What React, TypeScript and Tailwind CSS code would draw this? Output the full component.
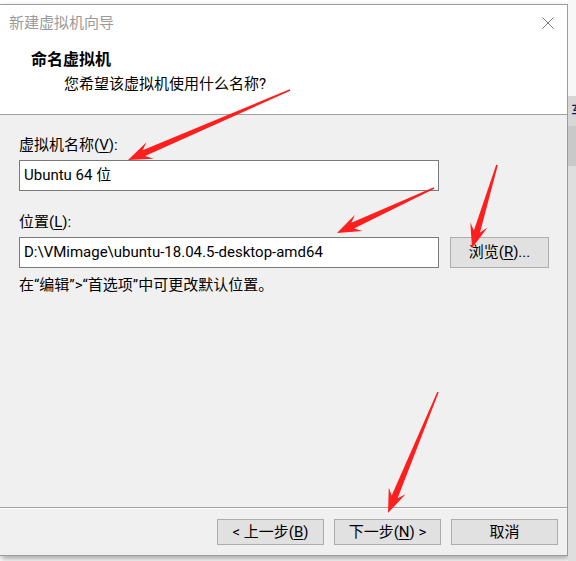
import React from "react";

const font = { fontFamily: 'Roboto, "Noto Sans CJK SC", sans-serif' };

type Arrow = { x1: number; y1: number; x2: number; y2: number };

// red annotation arrows drawn on top of the dialog
const arrows: Arrow[] = [
  { x1: 290, y1: 90, x2: 128, y2: 160 },
  { x1: 434, y1: 188, x2: 337, y2: 233 },
  { x1: 497, y1: 165, x2: 472, y2: 248 },
  { x1: 438, y1: 392, x2: 388, y2: 513 },
];

const arrowPoints = ({ x1, y1, x2, y2 }: Arrow) => {
  const dx = x2 - x1;
  const dy = y2 - y1;
  const len = Math.hypot(dx, dy);
  const ux = dx / len;
  const uy = dy / len;
  const nx = -uy;
  const ny = ux;
  const h = 24;
  const neck = h * 0.72;
  const w = 9;
  const s = 3.2;
  const t = 0.8;
  const nkx = x2 - ux * neck;
  const nky = y2 - uy * neck;
  const bx = x2 - ux * h;
  const by = y2 - uy * h;
  const pts = [
    [x1 + nx * t, y1 + ny * t],
    [nkx + nx * s, nky + ny * s],
    [bx + nx * w, by + ny * w],
    [x2, y2],
    [bx - nx * w, by - ny * w],
    [nkx - nx * s, nky - ny * s],
    [x1 - nx * t, y1 - ny * t],
  ];
  return pts.map((p) => `${p[0].toFixed(1)},${p[1].toFixed(1)}`).join(" ");
};

const Button = ({ children }: { children: React.ReactNode }) => (
  <div className="w-[107px] h-[26px] flex items-center justify-center bg-[#e1e1e1] border border-[#adadad] text-[15px] text-black">
    {children}
  </div>
);

const TextBox = ({ value }: { value: string }) => (
  <div className="w-[420px] h-[31px] bg-white border border-[#7a7a7a] flex items-center pl-[4px] text-[15px] text-black whitespace-nowrap">
    {value}
  </div>
);

export default function App() {
  return (
    <div className="relative w-[576px] h-[561px] overflow-hidden bg-white flex items-start" style={font}>
      <div className="mt-[4px] ml-[-1px] w-[569px] h-[552px] border border-[#9c9c9c] bg-[#f0f0f0] flex flex-col shadow-[2px_3px_6px_rgba(0,0,0,0.35)] shrink-0">
        {/* header */}
        <div className="h-[109px] bg-white border-b border-[#a0a0a0] box-content">
          <div className="h-[36px] flex items-center justify-between pl-[9px] pr-[13px]">
            <span className="text-[15px] text-[#9a9a9a]">新建虚拟机向导</span>
            <svg width="12" height="12" viewBox="0 0 12 12">
              <path d="M0.5 0.5 L11.5 11.5 M11.5 0.5 L0.5 11.5" stroke="#777" strokeWidth="1" />
            </svg>
          </div>
          <div className="pt-[8px] pl-[31px] text-[16px] leading-[22px] font-bold text-black">命名虚拟机</div>
          <div className="pt-[2px] pl-[64px] text-[15px] leading-[22px] text-black">您希望该虚拟机使用什么名称?</div>
        </div>

        {/* body */}
        <div className="flex-1 pl-[19px] pt-[19px] text-[15px] text-black">
          <div className="leading-[22px]">
            虚拟机名称(<span className="underline underline-offset-2">V</span>):
          </div>
          <div className="mt-[4px]">
            <TextBox value="Ubuntu 64 位" />
          </div>
          <div className="mt-[20px] leading-[22px]">
            位置(<span className="underline underline-offset-2">L</span>):
          </div>
          <div className="mt-[4px] flex items-center gap-[11px]">
            <TextBox value="D:\VMimage\ubuntu-18.04.5-desktop-amd64" />
            <div className="w-[99px] h-[31px] flex items-center justify-center bg-[#e1e1e1] border border-[#adadad]">
              浏览(<span className="underline underline-offset-2">R</span>)...
            </div>
          </div>
          <div className="mt-[6px] leading-[22px]">在“编辑”&gt;“首选项”中可更改默认位置。</div>
        </div>

        {/* footer */}
        <div className="h-[47px] border-t border-[#a0a0a0] box-content">
          <div className="h-full border-t border-white flex justify-end gap-[10px] pt-[10px] pr-[9px]">
            <Button>
              &lt; 上一步(<span className="underline underline-offset-2">B</span>)
            </Button>
            <Button>
              下一步(<span className="underline underline-offset-2">N</span>) &gt;
            </Button>
            <Button>取消</Button>
          </div>
        </div>
      </div>

      {/* background window peeking on the right */}
      <div className="flex-1 h-full flex flex-col">
        <div className="h-[96px] bg-[#f7f7f7]" />
        <div className="h-[30px] bg-[#d6d6d6] overflow-hidden">
          <div className="pl-[3px] pt-[6px] text-[16px] leading-[18px] text-[#0b1e4a] whitespace-nowrap">车</div>
        </div>
        <div className="h-[40px] bg-[#c9c9c9]" />
        <div className="flex-1 bg-[#dedede]" />
      </div>

      <svg className="absolute inset-0 pointer-events-none" width="576" height="561" viewBox="0 0 576 561">
        {arrows.map((a, i) => (
          <polygon key={i} points={arrowPoints(a)} fill="#ff1e1e" />
        ))}
      </svg>
    </div>
  );
}
